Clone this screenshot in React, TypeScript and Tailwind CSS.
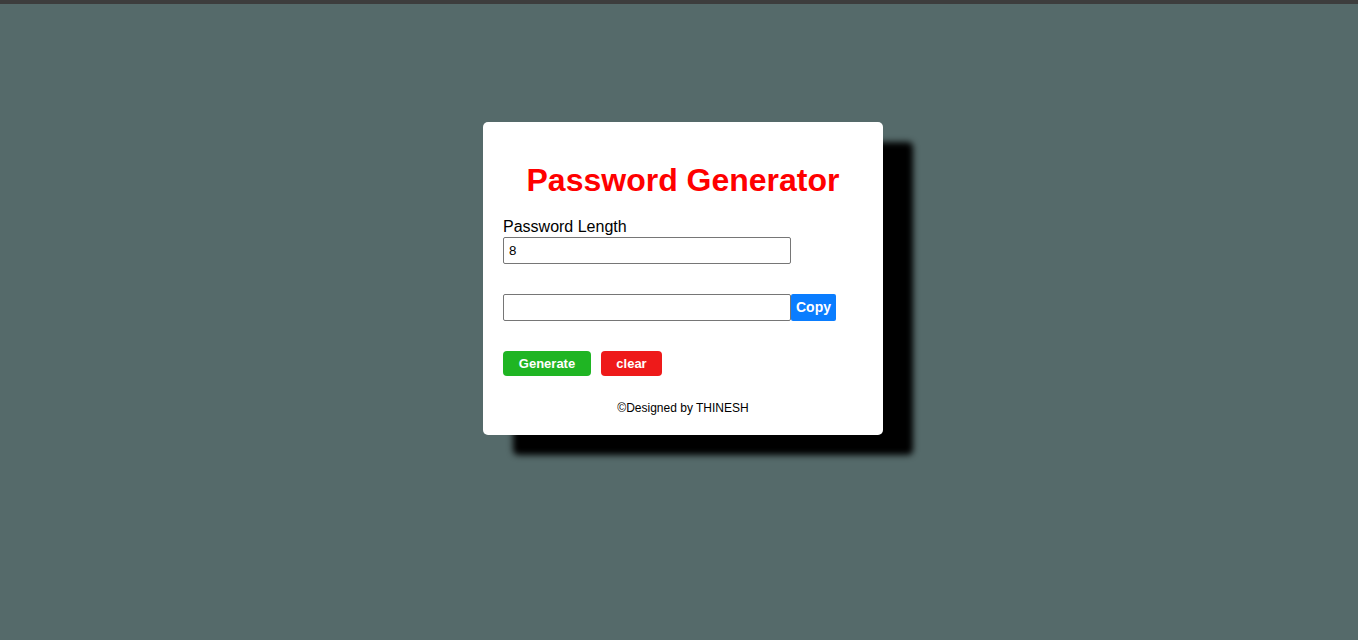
export default function App() {
  return (
    <div className="min-h-[640px] bg-[#556a6a] font-['Liberation_Sans',Arial,sans-serif]">
      <div className="h-[4px] bg-[#3d3d3d]" />
      <div className="flex justify-center pl-[8px] pt-[118px]">
        <div className="flex w-[400px] flex-col rounded-[5px] bg-white px-5 pt-5 pb-[20px] shadow-[30px_20px_6px_#000]">
          {/* title */}
          <h1 className="mt-[20px] text-center text-[32px] leading-[37px] font-bold text-[#ff0000]">
            Password Generator
          </h1>

          {/* length */}
          <label className="mt-[19px] text-[16px] leading-[18px] text-black">
            Password Length
          </label>
          <input
            type="text"
            defaultValue="8"
            className="mt-px h-[27px] w-[288px] rounded-[2px] border border-[#767676] px-[5px] text-[13.33px] text-black outline-none"
          />

          {/* output + copy */}
          <div className="mt-[30px] flex">
            <input
              type="text"
              className="h-[27px] w-[288px] rounded-[2px] border border-[#767676] px-[5px] text-[13.33px] outline-none"
            />
            <button className="h-[27px] w-[45px] rounded-[2px] bg-[#0a7dff] text-[14px] font-bold text-white">
              Copy
            </button>
          </div>

          {/* actions */}
          <div className="mt-[30px] flex gap-[10px]">
            <button className="h-[25px] w-[88px] rounded-[4px] bg-[#1fb523] text-[13px] font-bold text-white">
              Generate
            </button>
            <button className="h-[25px] w-[61px] rounded-[4px] bg-[#ee1a1a] text-[13px] font-bold text-white">
              clear
            </button>
          </div>

          <p className="mt-[25px] text-center text-[12px] leading-[14px] text-black">
            ©Designed by THINESH
          </p>
        </div>
      </div>
    </div>
  );
}
